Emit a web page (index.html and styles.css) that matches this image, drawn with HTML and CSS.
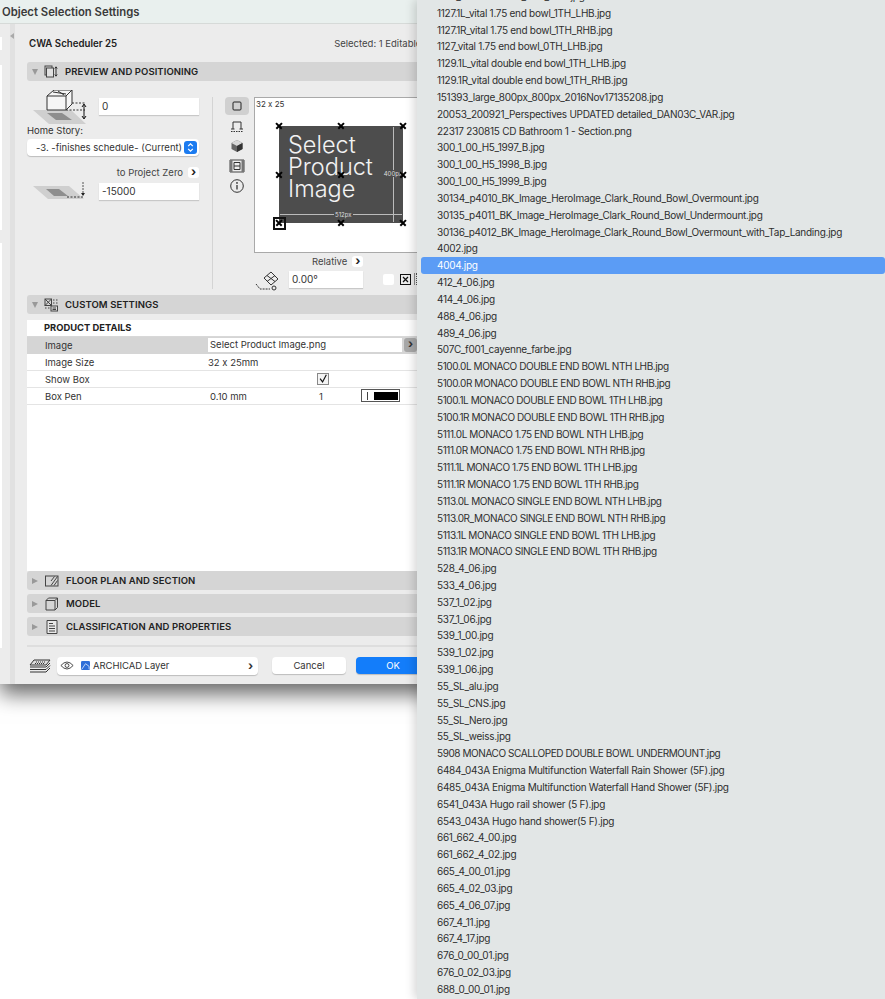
FILE: index.html
```html
<!DOCTYPE html>
<html lang="en">
<head>
    <meta charset="UTF-8">
    <title>Object Selection Settings</title>
    <link rel="stylesheet" href="styles.css">
</head>
<body>

<div class="dialog">
    <div class="titlebar">Object Selection Settings</div>
    <div class="dialog-body">
        <div class="sidebar">
            <div class="side-white side-top"></div>
            <div class="side-white side-a"></div>
            <div class="side-white side-b"></div>
        </div>
        <div class="side-rail"><span class="rail-arrow"></span></div>
        <div class="main">
            <div class="main-head">
                <span class="object-name">CWA Scheduler 25</span>
                <span class="selected">Selected: 1 Editable</span>
            </div>

            <div class="section-bar">
                <span class="tri-down"></span>
                <svg class="bar-icon" viewBox="0 0 14 14"><rect x="1" y="1" width="7" height="9" fill="none" stroke="#444"/><rect x="2.500" y="3" width="7" height="9" fill="#e0e0e0" stroke="#444"/><path d="M12 2v9M10.800 3.500L12 1.800l1.200 1.700M10.800 9.500L12 11.200l1.200-1.700" fill="none" stroke="#333"/></svg>
                <span>PREVIEW AND POSITIONING</span>
            </div>

            <div class="preview-section">
                <div class="position-col">
                    <div class="field-row first-field">
                        <svg class="story-icon" viewBox="0 0 54 35"><path d="M0 20h38l15 14H16z" fill="#cfcfcf"/><path d="M14 23h15l10 7H23z" fill="#8e8e8e"/><path d="M14 6l7-6h18v14l-6 6H14z" fill="#f6f6f6" stroke="#333"/><path d="M14 6h19v14M33 6l6-6M20 2l13 2M25 1l6 4" fill="none" stroke="#333"/><path d="M33 20h19M39 13h13" fill="none" stroke="#333" stroke-dasharray="2 1.500"/><path d="M51 15v13M49 17l2-3 2 3M49 26l2 3 2-3" fill="none" stroke="#111"/></svg>
                        <div class="input">0</div>
                    </div>
                    <div class="home-label">Home Story:</div>
                    <div class="story-select">
                        <span>-3. -finishes schedule- (Current)</span>
                        <span class="stepper"><svg viewBox="0 0 10 14"><path d="M2.500 5.500L5 3l2.500 2.500M2.500 8.500L5 11l2.500-2.500" fill="none" stroke="#fff" stroke-width="1.300"/></svg></span>
                    </div>
                    <div class="zero-row">to Project Zero <span class="chev-btn">›</span></div>
                    <div class="field-row">
                        <svg class="story-icon low" viewBox="0 0 54 18"><path d="M0 4h36l15 13H15z" fill="#cfcfcf"/><path d="M13 7h13l9 7H21z" fill="#8e8e8e"/><path d="M34 15h16" stroke="#333" stroke-dasharray="2 1.500"/><path d="M50 0v13" stroke="#555" stroke-dasharray="2 1"/><path d="M48 11l2 3 2-3z" fill="#222"/></svg>
                        <div class="input">-15000</div>
                    </div>
                </div>

                <div class="v-divider"></div>

                <div class="view-tabs">
                    <div class="view-tab active"><svg viewBox="0 0 14 14"><rect x="3" y="3" width="8" height="8" rx="1" fill="none" stroke="#222"/></svg></div>
                    <div class="view-tab"><svg viewBox="0 0 14 14"><path d="M3 10V3h8v7" fill="none" stroke="#333"/><path d="M1 10h3.500M9.500 10H13" stroke="#333"/><path d="M1 12.500h12" stroke="#333" stroke-dasharray="1.500 1"/></svg></div>
                    <div class="view-tab"><svg viewBox="0 0 14 14"><path d="M7 1l5.500 3v6L7 13l-5.500-3V4z" fill="#666"/><path d="M7 1l5.500 3L7 7 1.500 4z" fill="#d8d8d8"/><path d="M7 7l5.500-3v6L7 13z" fill="#333"/></svg></div>
                    <div class="view-tab"><svg class="wide-icon" viewBox="0 0 16 14"><path d="M1 1h14v12H1z" fill="none" stroke="#444"/><path d="M1 1h2.500v12H1zM12.500 1H15v12h-2.500z" fill="#777"/><path d="M5 3.500h6v7H5zM5 7h6" fill="none" stroke="#333"/></svg></div>
                    <div class="view-tab"><svg viewBox="0 0 14 14"><circle cx="7" cy="7" r="6.300" fill="none" stroke="#333"/><path d="M7 6v4.500" stroke="#333" stroke-width="1.300"/><circle cx="7" cy="3.900" r=".9" fill="#333"/></svg></div>
                </div>

                <div class="preview-col">
                    <div class="canvas">
                        <span class="canvas-size">32 x 25</span>
                        <div class="product-image">
                            <div class="product-text">Select<br>Product<br>Image</div>
                            <span class="dim-v"></span>
                            <span class="dim-v-label">400px</span>
                            <span class="dim-h"></span>
                            <span class="dim-h-label">512px</span>
                            <span class="hotspot tl"></span><span class="hotspot tc"></span><span class="hotspot tr"></span>
                            <span class="hotspot ml"></span><span class="hotspot mc"></span><span class="hotspot mr"></span>
                            <span class="hotspot bl"></span><span class="hotspot bc"></span><span class="hotspot br"></span>
                            <span class="anchor-box"></span>
                        </div>
                    </div>
                    <div class="relative-row">Relative <span class="chev-btn">›</span></div>
                    <div class="angle-row">
                        <svg class="angle-icon" viewBox="0 0 24 20"><path d="M9 7l7-6 7 7-7 6z" fill="#eee" stroke="#333"/><path d="M12 4.500l8 6M20 4.500l-8 6" stroke="#333" fill="none"/><path d="M1 13l4 5h10" fill="none" stroke="#333" stroke-dasharray="2 1"/><circle cx="19" cy="17" r="2" fill="none" stroke="#333"/></svg>
                        <div class="input angle-input">0.00°</div>
                        <span class="blank-check"></span>
                        <span class="x-check"><svg viewBox="0 0 9 9"><path d="M2 2l5 5M7 2L2 7" stroke="#111" stroke-width="1.200"/></svg></span>
                        <span class="grip"></span>
                    </div>
                </div>
            </div>

            <div class="section-bar custom-bar">
                <span class="tri-down"></span>
                <svg class="bar-icon" viewBox="0 0 14 14"><rect x="1" y="1" width="6.500" height="6.500" fill="none" stroke="#444"/><path d="M1 1l6.500 6.500M7.500 1L1 7.500M9 2h1.500M12 2h1.500M9 5h1.500M12 5h1.500M1 10h1.500M4 10h1.500" stroke="#444" fill="none"/><rect x="7" y="8" width="6.500" height="5" fill="#ddd" stroke="#444"/><path d="M8.500 10h3.500M8.500 11.500h3.500" stroke="#444"/></svg>
                <span>CUSTOM SETTINGS</span>
            </div>

            <div class="params">
                <div class="params-title">PRODUCT DETAILS</div>
                <div class="param-row picked">
                    <span class="param-name">Image</span>
                    <span class="param-input">Select Product Image.png</span>
                    <span class="param-arrow">›</span>
                </div>
                <div class="param-row">
                    <span class="param-name">Image Size</span>
                    <span class="param-value">32 x 25mm</span>
                </div>
                <div class="param-row">
                    <span class="param-name">Show Box</span>
                    <span class="param-check"><svg viewBox="0 0 12 12"><path d="M2.500 5.500l3 4L10 1" fill="none" stroke="#111" stroke-width="1.400"/></svg></span>
                </div>
                <div class="param-row">
                    <span class="param-name">Box Pen</span>
                    <span class="param-value pen-width">0.10 mm</span>
                    <span class="pen-num">1</span>
                    <span class="pen-swatch"><i></i><b></b></span>
                </div>
            </div>

            <div class="section-bar closed-bar">
                <span class="tri-right"></span>
                <svg class="bar-icon" viewBox="0 0 14 14"><rect x=".5" y="2" width="12.500" height="10" fill="none" stroke="#444"/><path d="M6 11.500l6.500-9M9 11.500l3.500-5M6 7l3.500-4.500" stroke="#444" fill="none"/></svg>
                <span>FLOOR PLAN AND SECTION</span>
            </div>
            <div class="section-bar closed-bar">
                <span class="tri-right"></span>
                <svg class="bar-icon" viewBox="0 0 14 14"><path d="M1 3.500L3.500 1h9v9.500L10 13H1zM1 3.500h9V13M10 3.500L12.500 1" fill="none" stroke="#444"/></svg>
                <span>MODEL</span>
            </div>
            <div class="section-bar closed-bar">
                <span class="tri-right"></span>
                <svg class="bar-icon" viewBox="0 0 14 14"><path d="M2 .5h10v13H2z" fill="#e8e8e8" stroke="#444"/><path d="M4 3.500h4M4 6h6M4 8.500h6M4 11h6" stroke="#444"/></svg>
                <span>CLASSIFICATION AND PROPERTIES</span>
            </div>

            <div class="footer-line"></div>
            <div class="footer">
                <svg class="layers-icon" viewBox="0 0 22 14"><path d="M5 1h16l-4 5H1z" fill="#ddd" stroke="#333"/><path d="M1 8h16l4-4M1 10.500h16l4-4M1 13h16l4-4" fill="none" stroke="#333"/><path d="M7 3h9M6 4.500h9" stroke="#333" stroke-dasharray="1 1"/></svg>
                <div class="layer-select">
                    <svg class="eye" viewBox="0 0 16 10"><path d="M1 5q7-8 14 0q-7 8-14 0z" fill="none" stroke="#333"/><circle cx="8" cy="5" r="2.200" fill="none" stroke="#333"/></svg>
                    <svg class="layer-badge" viewBox="0 0 10 10"><rect width="10" height="10" rx="1.500" fill="#2f6fd8"/><path d="M1 9l4-6 4 3v3" fill="none" stroke="#cfe0fb"/></svg>
                    <span class="layer-name">ARCHICAD Layer</span>
                    <span class="layer-chev">›</span>
                </div>
                <div class="btn">Cancel</div>
                <div class="btn primary">OK</div>
            </div>
        </div>
    </div>
</div>

<div class="file-popup">
    <div class="file clipped">1125_vital end bowl_0TH_LHB.jpg</div>
    <div class="file">1127.1L_vital 1.75 end bowl_1TH_LHB.jpg</div>
    <div class="file">1127.1R_vital 1.75 end bowl_1TH_RHB.jpg</div>
    <div class="file">1127_vital 1.75 end bowl_0TH_LHB.jpg</div>
    <div class="file">1129.1L_vital double end bowl_1TH_LHB.jpg</div>
    <div class="file">1129.1R_vital double end bowl_1TH_RHB.jpg</div>
    <div class="file">151393_large_800px_800px_2016Nov17135208.jpg</div>
    <div class="file">20053_200921_Perspectives UPDATED detailed_DAN03C_VAR.jpg</div>
    <div class="file">22317 230815 CD Bathroom 1 - Section.png</div>
    <div class="file">300_1_00_H5_1997_B.jpg</div>
    <div class="file">300_1_00_H5_1998_B.jpg</div>
    <div class="file">300_1_00_H5_1999_B.jpg</div>
    <div class="file">30134_p4010_BK_Image_HeroImage_Clark_Round_Bowl_Overmount.jpg</div>
    <div class="file">30135_p4011_BK_Image_HeroImage_Clark_Round_Bowl_Undermount.jpg</div>
    <div class="file">30136_p4012_BK_Image_HeroImage_Clark_Round_Bowl_Overmount_with_Tap_Landing.jpg</div>
    <div class="file">4002.jpg</div>
    <div class="file current">4004.jpg</div>
    <div class="file">412_4_06.jpg</div>
    <div class="file">414_4_06.jpg</div>
    <div class="file">488_4_06.jpg</div>
    <div class="file">489_4_06.jpg</div>
    <div class="file">507C_f001_cayenne_farbe.jpg</div>
    <div class="file caps">5100.0L MONACO DOUBLE END BOWL NTH LHB.jpg</div>
    <div class="file caps">5100.0R MONACO DOUBLE END BOWL NTH RHB.jpg</div>
    <div class="file caps">5100.1L MONACO DOUBLE END BOWL 1TH LHB.jpg</div>
    <div class="file caps">5100.1R MONACO DOUBLE END BOWL 1TH RHB.jpg</div>
    <div class="file caps">5111.0L MONACO 1.75 END BOWL NTH LHB.jpg</div>
    <div class="file caps">5111.0R MONACO 1.75 END BOWL NTH RHB.jpg</div>
    <div class="file caps">5111.1L MONACO 1.75 END BOWL 1TH LHB.jpg</div>
    <div class="file caps">5111.1R MONACO 1.75 END BOWL 1TH RHB.jpg</div>
    <div class="file caps">5113.0L MONACO SINGLE END BOWL NTH LHB.jpg</div>
    <div class="file caps">5113.0R_MONACO SINGLE END BOWL NTH RHB.jpg</div>
    <div class="file caps">5113.1L MONACO SINGLE END BOWL 1TH LHB.jpg</div>
    <div class="file caps">5113.1R MONACO SINGLE END BOWL 1TH RHB.jpg</div>
    <div class="file">528_4_06.jpg</div>
    <div class="file">533_4_06.jpg</div>
    <div class="file">537_1_02.jpg</div>
    <div class="file">537_1_06.jpg</div>
    <div class="file">539_1_00.jpg</div>
    <div class="file">539_1_02.jpg</div>
    <div class="file">539_1_06.jpg</div>
    <div class="file">55_SL_alu.jpg</div>
    <div class="file">55_SL_CNS.jpg</div>
    <div class="file">55_SL_Nero.jpg</div>
    <div class="file">55_SL_weiss.jpg</div>
    <div class="file caps">5908 MONACO SCALLOPED DOUBLE BOWL UNDERMOUNT.jpg</div>
    <div class="file">6484_043A Enigma Multifunction Waterfall Rain Shower (5F).jpg</div>
    <div class="file">6485_043A Enigma Multifunction Waterfall Hand Shower (5F).jpg</div>
    <div class="file">6541_043A Hugo rail shower (5 F).jpg</div>
    <div class="file">6543_043A Hugo hand shower(5 F).jpg</div>
    <div class="file">661_662_4_00.jpg</div>
    <div class="file">661_662_4_02.jpg</div>
    <div class="file">665_4_00_01.jpg</div>
    <div class="file">665_4_02_03.jpg</div>
    <div class="file">665_4_06_07.jpg</div>
    <div class="file">667_4_11.jpg</div>
    <div class="file">667_4_17.jpg</div>
    <div class="file">676_0_00_01.jpg</div>
    <div class="file">676_0_02_03.jpg</div>
    <div class="file">688_0_00_01.jpg</div>
</div>

</body>
</html>
```

FILE: styles.css
```css
html, body {
    margin: 0;
    padding: 0;
    height: 100%;
    overflow: hidden;
    background: #fff;
}
body {
    position: relative;
    font-family: Inter, "Liberation Sans", sans-serif;
    font-size: 9.5px;
    font-feature-settings: "calt" 0;
    color: #2b2b2b;
}

/* dialog */
.dialog {
    width: 600px;
    height: 684px;
    background: #ececec;
    box-shadow: 0 10px 20px rgba(0,0,0,0.6);
    overflow: hidden;
}
.titlebar {
    height: 24px;
    line-height: 24px;
    padding-left: 2px;
    background: #e9f0ee;
    border-bottom: 1px solid #d6dad8;
    box-sizing: border-box;
    font-size: 11.3px;
    font-weight: 600;
    color: #3a3a3a;
}
.dialog-body {
    display: flex;
    height: 660px;
}
.sidebar {
    width: 10px;
    padding-top: 13px;
    background: #ececec;
}
.side-white {
    width: 2px;
    background: #fff;
}
.side-top {
    height: 13px;
    margin-bottom: 15px;
}
.side-a {
    height: 165px;
    margin-bottom: 13px;
}
.side-b {
    height: 405px;
}
.side-rail {
    width: 5px;
    background: #e1e1e1;
    position: relative;
}
.rail-arrow {
    position: absolute;
    left: 0;
    top: 9px;
    border: 3px solid transparent;
    border-right: 4px solid #aaa;
    border-left: 0;
}
.main {
    flex: 1;
    padding: 0 0 0 12px;
}
.main-head {
    display: flex;
    align-items: center;
    height: 38px;
    padding-left: 2px;
}
.object-name {
    font-size: 9.7px;
    font-weight: 600;
    color: #222;
}
.selected {
    margin-left: 217px;
    color: #444;
}

/* section bars */
.section-bar {
    display: flex;
    align-items: center;
    width: 560px;
    height: 19px;
    padding-left: 5px;
    box-sizing: border-box;
    background: #d5d5d5;
    border-radius: 3px;
    font-size: 9.5px;
    font-weight: 600;
    letter-spacing: 0.08px;
    color: #222;
}
.tri-down {
    border-left: 3.5px solid transparent;
    border-right: 3.5px solid transparent;
    border-top: 6px solid #999;
    margin-right: 6px;
}
.tri-right {
    border-top: 3.5px solid transparent;
    border-bottom: 3.5px solid transparent;
    border-left: 6px solid #999;
    margin-right: 7px;
}
.bar-icon {
    width: 14px;
    height: 14px;
    margin-right: 7px;
}
.custom-bar {
    margin-top: 6px;
}
.closed-bar {
    margin-bottom: 4px;
}

/* preview and positioning */
.preview-section {
    display: flex;
    height: 208px;
    padding-top: 16px;
    box-sizing: border-box;
}
.position-col {
    width: 172px;
}
.field-row {
    display: flex;
    align-items: flex-end;
    justify-content: space-between;
}
.first-field {
    align-items: flex-start;
    height: 33px;
    margin-top: -7px;
}
.first-field .input {
    margin-top: 8px;
}
.story-icon {
    width: 54px;
    height: 35px;
    margin-left: 6px;
}
.story-icon.low {
    height: 18px;
}
.input {
    width: 100px;
    height: 17px;
    line-height: 17px;
    padding-left: 3px;
    box-sizing: border-box;
    background: #fff;
    box-shadow: 0 1px 1px rgba(0,0,0,0.15);
    color: #333;
    font-size: 10px;
}
.home-label {
    margin-top: 2px;
    height: 12px;
    line-height: 12px;
    color: #333;
}
.story-select {
    display: flex;
    align-items: center;
    justify-content: space-between;
    height: 17px;
    margin-top: 2px;
    padding: 0 2px 0 9px;
    background: #fff;
    border-radius: 4px;
    box-shadow: 0 1px 1px rgba(0,0,0,0.2);
    color: #333;
}
.stepper {
    display: block;
    width: 13px;
    height: 13px;
    background: #1b7bf0;
    border-radius: 3px;
}
.stepper svg {
    display: block;
    width: 13px;
    height: 13px;
}
.zero-row {
    display: flex;
    align-items: center;
    justify-content: flex-end;
    gap: 5px;
    height: 12px;
    margin-top: 10px;
    margin-bottom: 4px;
    color: #444;
}
.chev-btn {
    display: inline-block;
    width: 11px;
    height: 11px;
    line-height: 9px;
    text-align: center;
    background: #fff;
    border-radius: 3px;
    font-size: 12px;
    font-weight: 700;
    color: #222;
}
.v-divider {
    width: 1px;
    height: 192px;
    margin-left: 13px;
    background: #d4d4d4;
}
.view-tabs {
    display: flex;
    flex-direction: column;
    gap: 2px;
    width: 24px;
    margin-left: 12px;
}
.view-tab {
    display: flex;
    align-items: center;
    justify-content: center;
    width: 24px;
    height: 18px;
    border-radius: 4px;
}
.view-tab.active {
    background: #d0d0d0;
}
.view-tab svg {
    width: 14px;
    height: 14px;
}
.view-tab svg.wide-icon {
    width: 16px;
}
.preview-col {
    width: 300px;
    margin-left: 5px;
}
.canvas {
    position: relative;
    width: 300px;
    height: 156px;
    box-sizing: border-box;
    background: #fff;
    border: 1px solid #a9a9a9;
}
.canvas-size {
    position: absolute;
    left: 1px;
    top: 1px;
    font-size: 8px;
    color: #333;
}
.product-image {
    position: absolute;
    left: 24px;
    top: 28px;
    width: 124px;
    height: 97px;
    background: #4d4d4d;
}
.product-text {
    position: absolute;
    left: 9px;
    top: 8px;
    font-size: 23.5px;
    font-weight: 300;
    line-height: 22px;
    color: #f2f2f2;
}
.dim-v {
    position: absolute;
    right: 9px;
    top: 1px;
    bottom: 1px;
    width: 1px;
    background: #bbb;
}
.dim-v-label {
    position: absolute;
    right: 1px;
    top: 44px;
    font-size: 6px;
    color: #ddd;
    background: #4d4d4d;
}
.dim-h {
    position: absolute;
    left: 1px;
    right: 1px;
    bottom: 8px;
    height: 1px;
    background: #bbb;
}
.dim-h-label {
    position: absolute;
    left: 55px;
    bottom: 5px;
    font-size: 6px;
    padding: 0 1px;
    color: #ddd;
    background: #4d4d4d;
}
.hotspot {
    position: absolute;
    width: 0;
    height: 0;
}
.hotspot::before,
.hotspot::after {
    content: "";
    position: absolute;
    left: -4px;
    top: -1px;
    width: 8px;
    height: 1.6px;
    background: #000;
    transform: rotate(45deg);
}
.hotspot::after {
    transform: rotate(-45deg);
}
.tl { left: 0; top: 0; }
.tc { left: 62px; top: 0; }
.tr { left: 124px; top: 0; }
.ml { left: 0; top: 49px; }
.mc { left: 62px; top: 49px; }
.mr { left: 124px; top: 49px; }
.bl { left: 0; top: 97px; }
.bc { left: 62px; top: 97px; }
.br { left: 124px; top: 97px; }
.anchor-box {
    position: absolute;
    left: -6px;
    top: 91px;
    width: 9px;
    height: 9px;
    border: 2px solid #111;
}
.relative-row {
    display: flex;
    align-items: center;
    gap: 5px;
    height: 12px;
    margin: 2px 0 0 58px;
    color: #444;
}
.angle-row {
    display: flex;
    align-items: center;
    height: 18px;
    margin-top: 3px;
}
.angle-icon {
    width: 24px;
    height: 20px;
    margin-left: 1px;
    margin-top: 3px;
}
.angle-input {
    width: 74px;
    margin-left: 10px;
}
.blank-check {
    width: 11px;
    height: 11px;
    margin-left: 20px;
    background: #fff;
    border-radius: 2px;
}
.x-check {
    display: block;
    width: 9px;
    height: 9px;
    margin-left: 6px;
    border: 1px solid #111;
}
.x-check svg {
    display: block;
    width: 9px;
    height: 9px;
}
.grip {
    width: 3px;
    height: 12px;
    margin-left: 3px;
    border-left: 1px solid #888;
    border-right: 1px dotted #555;
    box-sizing: border-box;
}

/* custom settings */
.params {
    width: 560px;
    height: 251px;
    margin-top: 6px;
    background: #fff;
    box-sizing: border-box;
    padding-top: 1px;
}
.params-title {
    height: 16px;
    line-height: 14px;
    box-sizing: border-box;
    padding-left: 17px;
    font-size: 9.4px;
    font-weight: 700;
    color: #222;
    border-bottom: 1px solid #d8d8d8;
}
.param-row {
    position: relative;
    display: flex;
    align-items: center;
    height: 17px;
    box-sizing: border-box;
    border-bottom: 1px solid #e4e4e4;
    color: #333;
}
.param-row.picked {
    background: #d5d5d5;
    border-bottom-color: #d5d5d5;
}
.param-name {
    width: 181px;
    padding-left: 18px;
    box-sizing: border-box;
}
.param-input {
    width: 194px;
    height: 14px;
    line-height: 14px;
    padding-left: 2px;
    box-sizing: border-box;
    background: #fff;
}
.param-arrow {
    width: 13px;
    height: 14px;
    margin-left: 2px;
    line-height: 12px;
    text-align: center;
    font-size: 12px;
    font-weight: 700;
    background: #a8a8a8;
    border-radius: 3px;
}
.pen-width {
    padding-left: 2px;
}
.param-check {
    display: block;
    width: 10px;
    height: 10px;
    margin-left: 109px;
    border: 1px solid #888;
    background: #f4f4f4;
}
.param-check svg {
    display: block;
    width: 10px;
    height: 10px;
}
.pen-num {
    position: absolute;
    left: 292px;
}
.pen-swatch {
    position: absolute;
    left: 334px;
    top: 1px;
    display: flex;
    align-items: center;
    width: 39px;
    height: 13px;
    box-sizing: border-box;
    border: 1px solid #555;
    background: #fff;
}
.pen-swatch i {
    width: 1px;
    height: 8px;
    margin-left: 5px;
    background: #444;
}
.pen-swatch b {
    width: 24px;
    height: 8px;
    margin-left: 6px;
    background: #000;
}

/* footer */
.footer-line {
    width: 560px;
    height: 2px;
    margin-top: 9px;
    background: #dedede;
}
.footer {
    display: flex;
    align-items: center;
    height: 19px;
    margin-top: 9px;
}
.layers-icon {
    width: 22px;
    height: 14px;
    margin-left: 2px;
}
.layer-select {
    position: relative;
    display: flex;
    align-items: center;
    width: 201px;
    height: 18px;
    margin-left: 6px;
    background: #fff;
    border-radius: 4px;
    box-shadow: 0 1px 1px rgba(0,0,0,0.2);
    color: #333;
    letter-spacing: -0.05px;
}
.eye {
    width: 14px;
    height: 9px;
    margin-left: 3px;
}
.layer-badge {
    width: 9px;
    height: 9px;
    margin-left: 7px;
}
.layer-name {
    margin-left: 3px;
}
.layer-chev {
    margin-left: auto;
    margin-right: 5px;
    font-size: 12px;
    font-weight: 700;
}
.btn {
    width: 74px;
    height: 17px;
    line-height: 17px;
    margin-left: 14px;
    text-align: center;
    background: #fff;
    border-radius: 4px;
    box-shadow: 0 1px 1px rgba(0,0,0,0.2);
    color: #333;
}
.btn.primary {
    margin-left: 10px;
    background: #137dfa;
    color: #fff;
}

/* file list popup */
.file-popup {
    position: absolute;
    left: 417px;
    top: 0;
    right: 0;
    height: 999px;
    background: #e2e6e6;
    box-shadow: -3px 0 9px rgba(0,0,0,0.16);
    overflow: hidden;
}
.file {
    height: 16.83px;
    line-height: 16.83px;
    margin: 0 0 0 4px;
    padding-left: 16px;
    font-size: 10px;
    letter-spacing: -0.27px;
    color: #2e2e2e;
    white-space: nowrap;
    border-radius: 3px;
}
.file.caps {
    letter-spacing: -0.42px;
}
.file.clipped {
    margin-top: -12px;
}
.file.current {
    background: #5b9cf5;
    color: #fff;
}
```
